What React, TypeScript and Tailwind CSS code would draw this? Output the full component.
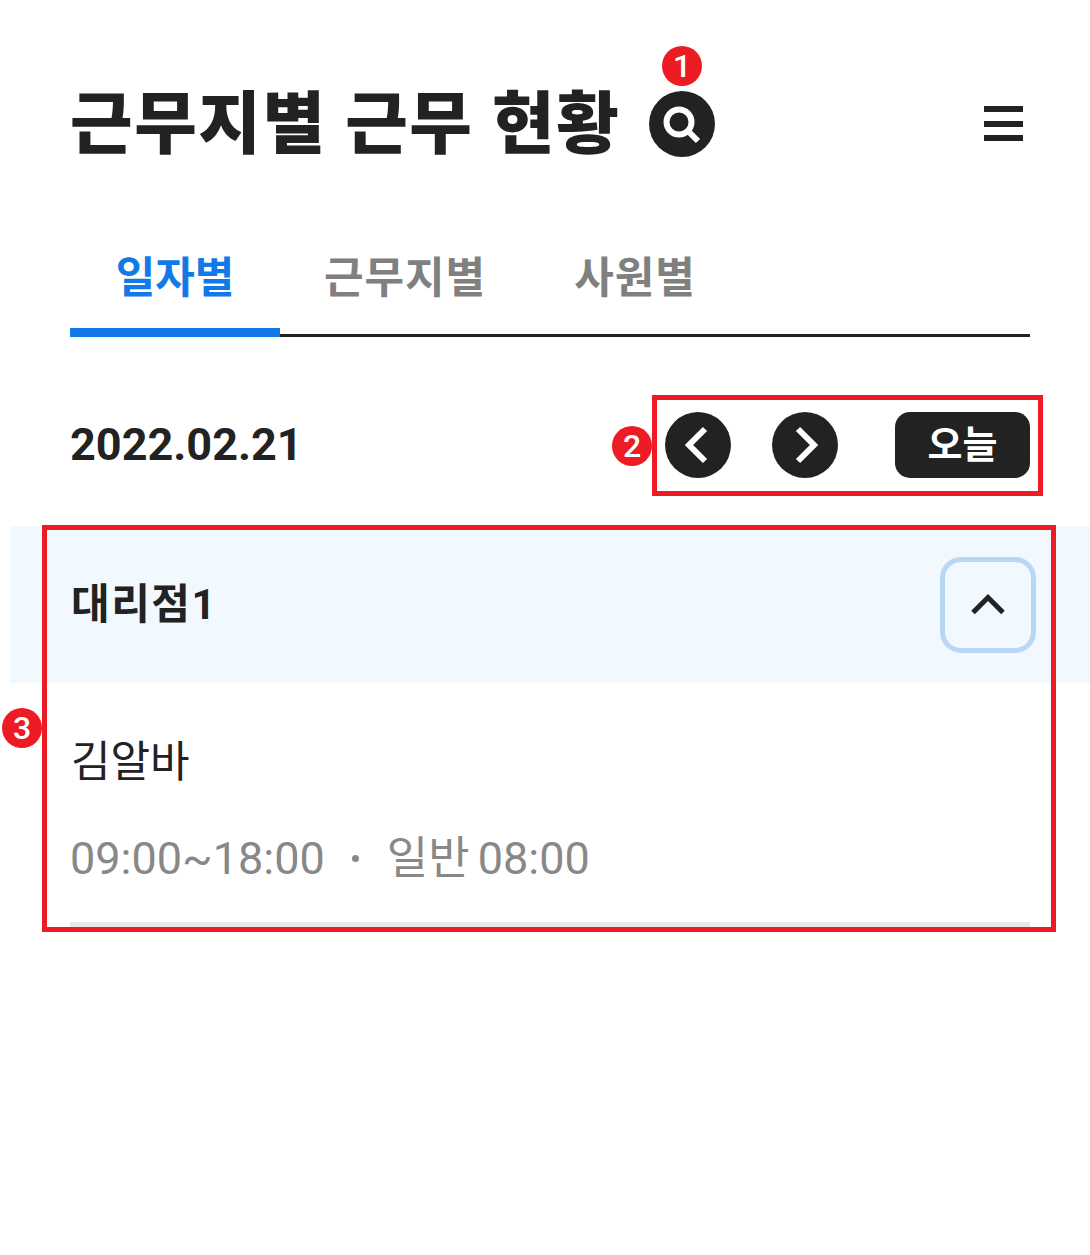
import React from 'react';

const Marker = ({ n, className }: { n: number; className: string }) => (
  <div className={`absolute flex h-10 w-10 items-center justify-center rounded-full bg-[#ed1c24] text-[32px] font-medium leading-none text-white ${className}`}>
    {n}
  </div>
);

const Chevron = ({ points }: { points: string }) => (
  <svg width="66" height="66" viewBox="0 0 66 66" fill="none">
    <polyline points={points} stroke="#fff" strokeWidth="6" />
  </svg>
);

export default function App() {
  return (
    <div className="relative h-[1255px] w-[1090px] overflow-hidden bg-white font-['Roboto','Noto_Sans_CJK_KR',sans-serif] text-[#222222]">
      <div className="pl-[70px] pr-[60px] pt-[90px]">
        {/* Header */}
        <header className="flex h-[67px] items-center justify-between">
          <div className="flex items-center gap-[29px]">
            <h1 className="whitespace-nowrap pt-[3px] text-[68px] font-black leading-[67px] tracking-[1.6px]">근무지별 근무 현황</h1>
            <button className="flex h-[66px] w-[66px] items-center justify-center rounded-full bg-[#222222]">
              <svg width="66" height="66" viewBox="0 0 66 66" fill="none" stroke="#fff">
                <circle cx="30" cy="31" r="12.5" strokeWidth="6" />
                <path d="M39 40 L49 50" strokeWidth="6" />
              </svg>
            </button>
          </div>
          <div className="mr-[7px] flex w-[39px] flex-col gap-[8.5px]">
            <div className="h-[6px] bg-[#222222]" />
            <div className="h-[6px] bg-[#222222]" />
            <div className="h-[6px] bg-[#222222]" />
          </div>
        </header>

        {/* Tabs */}
        <nav className="mt-[81px] flex h-[99px] items-end border-b-[3px] border-[#222222]">
          <div className="-mb-[3px] flex h-[99px] w-[210px] items-center justify-center border-b-[9px] border-[#127ae6] pb-[10px] text-[43px] font-bold text-[#127ae6]">일자별</div>
          <div className="flex h-[96px] w-[250px] items-center justify-center pb-[16px] text-[43px] font-bold tracking-[1px] text-[#808080]">근무지별</div>
          <div className="flex h-[96px] w-[210px] items-center justify-center pb-[16px] text-[43px] font-bold tracking-[1px] text-[#808080]">사원별</div>
        </nav>

        {/* Date row */}
        <div className="mt-[75px] flex h-[66px] items-center justify-between">
          <div className="text-[45px] font-bold">2022.02.21</div>
          <div className="flex items-center">
            <button className="h-[66px] w-[66px] rounded-full bg-[#222222]">
              <Chevron points="40,17 24,33 40,49" />
            </button>
            <button className="ml-[41px] h-[66px] w-[66px] rounded-full bg-[#222222]">
              <Chevron points="26,17 42,33 26,49" />
            </button>
            <button className="ml-[57px] flex h-[66px] w-[135px] items-center justify-center rounded-[15px] bg-[#222222] text-[38px] font-bold text-white">오늘</button>
          </div>
        </div>

        {/* Accordion */}
        <div className="-ml-[60px] -mr-[60px] mt-[48px] flex h-[157px] items-center justify-between bg-[#f1f8fe] pl-[61px] pr-[54px]">
          <div className="text-[42px] font-bold tracking-[1.5px]">대리점1</div>
          <button className="flex h-[96px] w-[96px] items-center justify-center rounded-[21px] border-[5.5px] border-[#b8d7f5]">
            <svg width="40" height="30" viewBox="0 0 40 30" fill="none">
              <polyline points="5,22.5 20,7.5 35,22.5" stroke="#222222" strokeWidth="5" />
            </svg>
          </button>
        </div>
        <div className="mt-[51px] pl-px text-[43px] leading-[57px]">김알바</div>
        <div className="mt-[39px] flex items-center text-[45px] leading-[57px] text-[#888888]">
          <span>09:00~18:00</span>
          <span className="ml-[27px] mr-[28px] h-[7px] w-[7px] rounded-full bg-[#888888]" />
          <span className="[word-spacing:-3px]">일반 08:00</span>
        </div>
        <div className="mt-[35px] h-[8px] bg-[#e8e8e8]" />
      </div>

      {/* Annotations */}
      <div className="absolute left-[652px] top-[395px] h-[101px] w-[391px] border-[5px] border-[#ed1c24]" />
      <div className="absolute left-[42px] top-[525px] h-[407px] w-[1014px] border-[5px] border-[#ed1c24]" />
      <Marker n={1} className="left-[662px] top-[46px]" />
      <Marker n={2} className="left-[612px] top-[426px]" />
      <Marker n={3} className="left-[2px] top-[708px]" />
    </div>
  );
}
